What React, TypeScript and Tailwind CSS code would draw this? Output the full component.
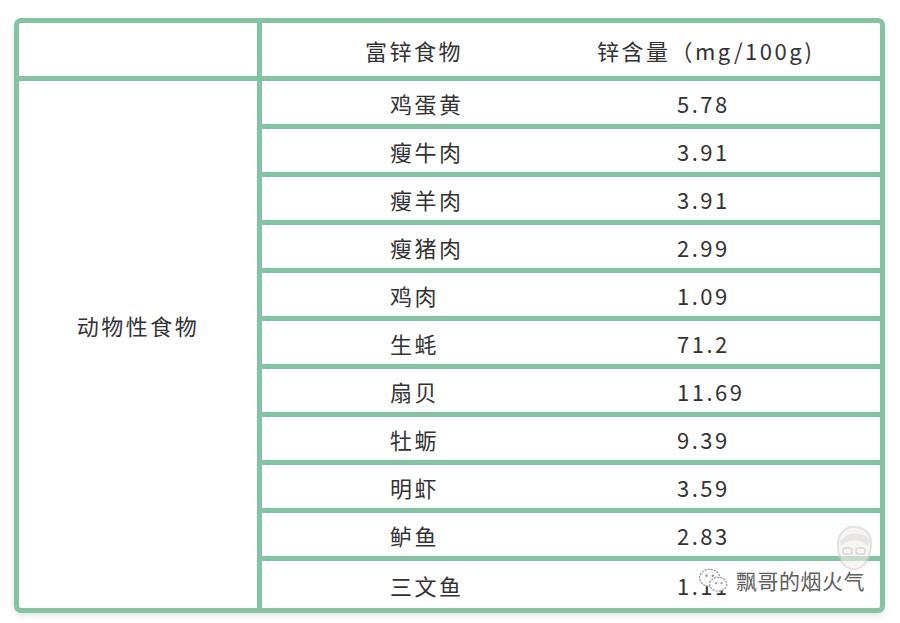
import React from 'react'

const rows: [string, string][] = [
  ['鸡蛋黄', '5.78'],
  ['瘦牛肉', '3.91'],
  ['瘦羊肉', '3.91'],
  ['瘦猪肉', '2.99'],
  ['鸡肉', '1.09'],
  ['生蚝', '71.2'],
  ['扇贝', '11.69'],
  ['牡蛎', '9.39'],
  ['明虾', '3.59'],
  ['鲈鱼', '2.83'],
  ['三文鱼', '1.11'],
]

function WeChatMark() {
  return (
    <svg width="32" height="28" viewBox="0 0 30 26" className="shrink-0">
      <ellipse cx="11" cy="10" rx="9.5" ry="8" fill="#fff" stroke="#9a9a9a" strokeWidth="1.2" strokeDasharray="2 1" />
      <ellipse cx="19" cy="16" rx="8" ry="6.5" fill="#fff" stroke="#9a9a9a" strokeWidth="1.2" strokeDasharray="2 1" />
      <circle cx="8" cy="8" r="1.2" fill="#9a9a9a" />
      <circle cx="14" cy="8" r="1.2" fill="#9a9a9a" />
      <circle cx="17" cy="15" r="1" fill="#9a9a9a" />
      <circle cx="22" cy="15" r="1" fill="#9a9a9a" />
    </svg>
  )
}

function Avatar() {
  return (
    <svg width="44" height="50" viewBox="0 0 44 50" className="absolute left-[832px] top-[524px] opacity-60">
      <path d="M6 24 C4 8 16 2 24 3 C36 4 42 14 38 28 C36 40 28 46 20 45 C10 44 7 34 6 24 Z" fill="#f3efe8" stroke="#cfcfcf" strokeWidth="2" />
      <path d="M8 18 C14 8 30 6 38 16 L36 22 C28 14 16 14 9 22 Z" fill="#d6d6d6" />
      <rect x="11" y="24" width="9" height="6" rx="2" fill="none" stroke="#bdbdbd" strokeWidth="1.5" />
      <rect x="24" y="24" width="9" height="6" rx="2" fill="none" stroke="#bdbdbd" strokeWidth="1.5" />
    </svg>
  )
}

export default function App() {
  return (
    <div
      className="relative h-[623px] w-[900px] overflow-hidden bg-white text-[#333] text-[22px] tracking-[2.5px]"
      style={{ fontFamily: '"Noto Sans CJK SC", "Noto Sans", sans-serif' }}
    >
      <div className="ml-[14px] mt-[18px] w-[871px] overflow-hidden rounded-[7px] border-[5px] border-[#83c4a3] bg-white shadow-[0_2px_6px_rgba(0,0,0,0.12)]">
        {/* header */}
        <div className="flex h-[58px] border-b-[5px] border-[#83c4a3]">
          <div className="w-[243px] shrink-0 border-r-[5px] border-[#83c4a3]" />
          <div className="flex flex-1 items-center leading-none">
            <div className="w-[280px] pl-[103px]">富锌食物</div>
            <div className="pl-[55px]">锌含量（mg/100g)</div>
          </div>
        </div>

        {/* body */}
        <div className="flex">
          <div className="flex w-[243px] shrink-0 items-start justify-center border-r-[5px] border-[#83c4a3] pt-[233px] leading-none">
            动物性食物
          </div>
          <div className="flex flex-1 flex-col">
            {rows.map(([name, zinc], i) => (
              <div
                key={name}
                className={
                  i === rows.length - 1
                    ? 'flex h-[47px] items-center leading-none'
                    : 'flex h-[48px] items-center border-b-[5px] border-[#83c4a3] leading-none'
                }
              >
                <div className="w-[280px] pl-[128px]">{name}</div>
                <div className="pl-[135px]">{zinc}</div>
              </div>
            ))}
          </div>
        </div>
      </div>

      {/* watermark */}
      <Avatar />
      <div className="absolute left-[698px] top-[565px] flex items-center gap-[6px] text-[21px] tracking-[0.5px] text-[#5e5e5e] [text-shadow:0_0_2px_#fff,0_0_2px_#fff,0_0_3px_#fff]">
        <WeChatMark />
        <span>飘哥的烟火气</span>
      </div>
    </div>
  )
}
